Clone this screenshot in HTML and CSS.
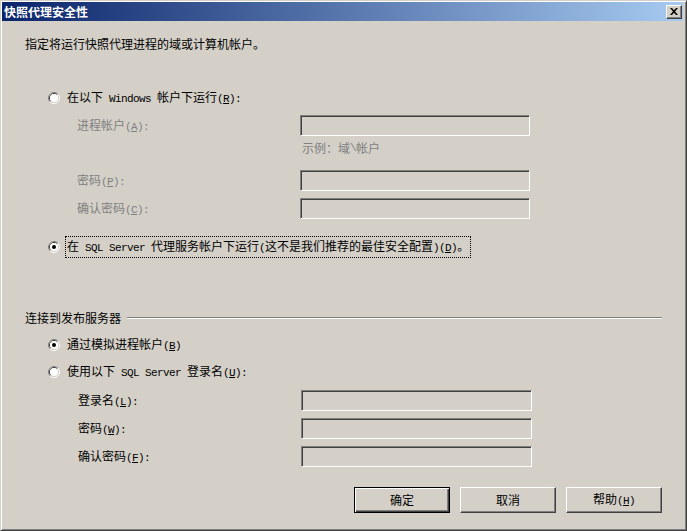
FILE: index.html
```html
<!DOCTYPE html>
<html lang="zh-CN">
<head>
<meta charset="utf-8">
<title>快照代理安全性</title>
<link rel="stylesheet" href="styles.css">
</head>
<body>
<div class="window">
  <div class="titlebar">
    <span class="title">快照代理安全性</span>
    <span class="close">
      <svg width="8" height="7" viewBox="0 0 8 7"><path d="M0 0h2l2 2.2L6 0h2L5 3.5 8 7H6L4 4.8 2 7H0l3-3.5z" fill="#000"/></svg>
    </span>
  </div>
  <div class="content">
    <div class="row intro">指定将运行快照代理进程的域或计算机帐户。</div>

    <div class="row radio-row r1">
      <svg class="radio" width="12" height="12" viewBox="0 0 12 12"><path d="M9.89 2.11A5.5 5.5 0 0 0 2.11 9.89" fill="none" stroke="#808080"/><path d="M2.11 9.89A5.5 5.5 0 0 0 9.89 2.11" fill="none" stroke="#fff"/><path d="M9.18 2.82A4.5 4.5 0 0 0 2.82 9.18" fill="none" stroke="#404040"/><path d="M2.82 9.18A4.5 4.5 0 0 0 9.18 2.82" fill="none" stroke="#d4d0c8"/><circle cx="6" cy="6" r="4" fill="#fff"/></svg>
      <span class="rlabel">在以下<span class="m"> Windows </span>帐户下运行<span class="m">(<u>R</u>):</span></span>
    </div>

    <div class="row field f1 disabled">
      <span class="flabel">进程帐户<span class="m">(<u>A</u>):</span></span>
      <span class="textbox"></span>
    </div>
    <div class="row example">示例：域<span class="m">\</span>帐户</div>
    <div class="row field f2 disabled">
      <span class="flabel">密码<span class="m">(<u>P</u>):</span></span>
      <span class="textbox"></span>
    </div>
    <div class="row field f3 disabled">
      <span class="flabel">确认密码<span class="m">(<u>C</u>):</span></span>
      <span class="textbox"></span>
    </div>

    <div class="row radio-row r2">
      <svg class="radio" width="12" height="12" viewBox="0 0 12 12"><path d="M9.89 2.11A5.5 5.5 0 0 0 2.11 9.89" fill="none" stroke="#808080"/><path d="M2.11 9.89A5.5 5.5 0 0 0 9.89 2.11" fill="none" stroke="#fff"/><path d="M9.18 2.82A4.5 4.5 0 0 0 2.82 9.18" fill="none" stroke="#404040"/><path d="M2.82 9.18A4.5 4.5 0 0 0 9.18 2.82" fill="none" stroke="#d4d0c8"/><circle cx="6" cy="6" r="4" fill="#fff"/><circle cx="6" cy="6" r="2" fill="#000"/></svg>
      <span class="rlabel focus">在<span class="m"> SQL Server </span>代理服务帐户下运行<span class="m">(</span>这不是我们推荐的最佳安全配置<span class="m">)(<u>D</u>)</span>。</span>
    </div>

    <div class="row group">
      <span class="gtitle">连接到发布服务器</span>
      <span class="gline"></span>
    </div>

    <div class="row radio-row r3">
      <svg class="radio" width="12" height="12" viewBox="0 0 12 12"><path d="M9.89 2.11A5.5 5.5 0 0 0 2.11 9.89" fill="none" stroke="#808080"/><path d="M2.11 9.89A5.5 5.5 0 0 0 9.89 2.11" fill="none" stroke="#fff"/><path d="M9.18 2.82A4.5 4.5 0 0 0 2.82 9.18" fill="none" stroke="#404040"/><path d="M2.82 9.18A4.5 4.5 0 0 0 9.18 2.82" fill="none" stroke="#d4d0c8"/><circle cx="6" cy="6" r="4" fill="#fff"/><circle cx="6" cy="6" r="2" fill="#000"/></svg>
      <span class="rlabel">通过模拟进程帐户<span class="m">(<u>B</u>)</span></span>
    </div>
    <div class="row radio-row r4">
      <svg class="radio" width="12" height="12" viewBox="0 0 12 12"><path d="M9.89 2.11A5.5 5.5 0 0 0 2.11 9.89" fill="none" stroke="#808080"/><path d="M2.11 9.89A5.5 5.5 0 0 0 9.89 2.11" fill="none" stroke="#fff"/><path d="M9.18 2.82A4.5 4.5 0 0 0 2.82 9.18" fill="none" stroke="#404040"/><path d="M2.82 9.18A4.5 4.5 0 0 0 9.18 2.82" fill="none" stroke="#d4d0c8"/><circle cx="6" cy="6" r="4" fill="#fff"/></svg>
      <span class="rlabel">使用以下<span class="m"> SQL Server </span>登录名<span class="m">(<u>U</u>):</span></span>
    </div>

    <div class="row field lower f4">
      <span class="flabel">登录名<span class="m">(<u>L</u>):</span></span>
      <span class="textbox"></span>
    </div>
    <div class="row field lower f5">
      <span class="flabel">密码<span class="m">(<u>W</u>):</span></span>
      <span class="textbox"></span>
    </div>
    <div class="row field lower f6">
      <span class="flabel">确认密码<span class="m">(<u>F</u>):</span></span>
      <span class="textbox"></span>
    </div>

    <div class="row buttons">
      <button class="btn default">确定</button>
      <button class="btn">取消</button>
      <button class="btn">帮助<span class="m">(<u>H</u>)</span></button>
    </div>
  </div>
</div>
</body>
</html>
```

FILE: styles.css
```css
html, body {
  margin: 0;
  padding: 0;
  background: #d4d0c8;
}
body {
  font-family: "Noto Sans CJK SC", "Liberation Sans", sans-serif;
  font-size: 12px;
  color: #000;
}
.window {
  width: 687px;
  height: 531px;
  box-sizing: border-box;
  border: 1px solid;
  border-color: #d4d0c8 #404040 #404040 #d4d0c8;
  box-shadow: inset 1px 1px #fff, inset -1px -1px #808080;
  padding: 1px 3px 3px 1px;
  display: flex;
  flex-direction: column;
  background: #d4d0c8;
}
.titlebar {
  height: 19px;
  flex: none;
  display: flex;
  align-items: center;
  justify-content: space-between;
  background: linear-gradient(to right, #0a246a 0%, #a6caf0 100%);
  padding: 0 1px 0 2px;
}
.title {
  color: #fff;
  font-weight: bold;
  font-size: 12px;
  line-height: 14px;
}
.close {
  width: 16px;
  height: 14px;
  box-sizing: border-box;
  background: #d4d0c8;
  border: 1px solid;
  border-color: #fff #404040 #404040 #fff;
  box-shadow: inset -1px -1px #808080;
  display: flex;
  align-items: center;
  justify-content: center;
  padding-right: 1px;
}
.close svg { display: block; }
.content {
  display: flex;
  flex-direction: column;
  flex: 1;
}
.row {
  display: flex;
  align-items: center;
  flex: none;
  line-height: 14px;
  white-space: nowrap;
}
.m {
  font-family: "Liberation Mono", monospace;
  font-size: 11px;
  letter-spacing: -0.6px;
  white-space: pre;
}
u { text-underline-offset: 1px; }

.intro { margin: 16px 0 0 23px; height: 14px; }

.radio-row { height: 14px; margin-left: 46px; }
.radio { display: block; flex: none; margin-right: 7px; }
.r1 { margin-top: 40px; }
.r2 { margin-top: 18px; height: 20px; }
.r2 .radio { margin-right: 5px; }
.r3 { margin-top: 13px; }
.r4 { margin-top: 13px; }
.focus {
  border: 1px dotted #000;
  padding: 2px 1px 2px 1px;
}

.field { height: 21px; margin-left: 75px; }
.flabel { width: 223px; flex: none; }
.disabled .flabel { color: #808080; }
.textbox {
  width: 230px;
  height: 21px;
  box-sizing: border-box;
  border: 1px solid;
  border-color: #808080 #fff #fff #808080;
  box-shadow: inset 1px 1px #404040, inset -1px -1px #d4d0c8;
  background: #d4d0c8;
}
.lower { margin-left: 76px; }
.lower .textbox { width: 231px; }
.f1 { margin-top: 10px; }
.example { margin: 5px 0 0 300px; height: 14px; color: #808080; }
.f2 { margin-top: 15px; }
.f3 { margin-top: 7px; }
.f4 { margin-top: 11px; }
.f5 { margin-top: 7px; }
.f6 { margin-top: 7px; }

.group { margin: 54px 21px 0 23px; height: 14px; }
.gtitle { flex: none; margin-right: 6px; }
.gline {
  flex: 1;
  height: 0;
  border-top: 1px solid #808080;
  border-bottom: 1px solid #fff;
}

.buttons {
  margin: 20px 21px 0 0;
  justify-content: flex-end;
  gap: 10px;
}
.btn {
  width: 96px;
  height: 26px;
  box-sizing: border-box;
  background: #d4d0c8;
  font-family: "Noto Sans CJK SC", sans-serif;
  font-size: 12px;
  color: #000;
  border: 1px solid;
  border-color: #fff #404040 #404040 #fff;
  box-shadow: inset -1px -1px #808080;
  padding: 0;
  line-height: 14px;
}
.btn.default {
  border: 1px solid #000;
  box-shadow: inset 1px 1px #fff, inset -1px -1px #404040, inset -2px -2px #808080;
}
```
